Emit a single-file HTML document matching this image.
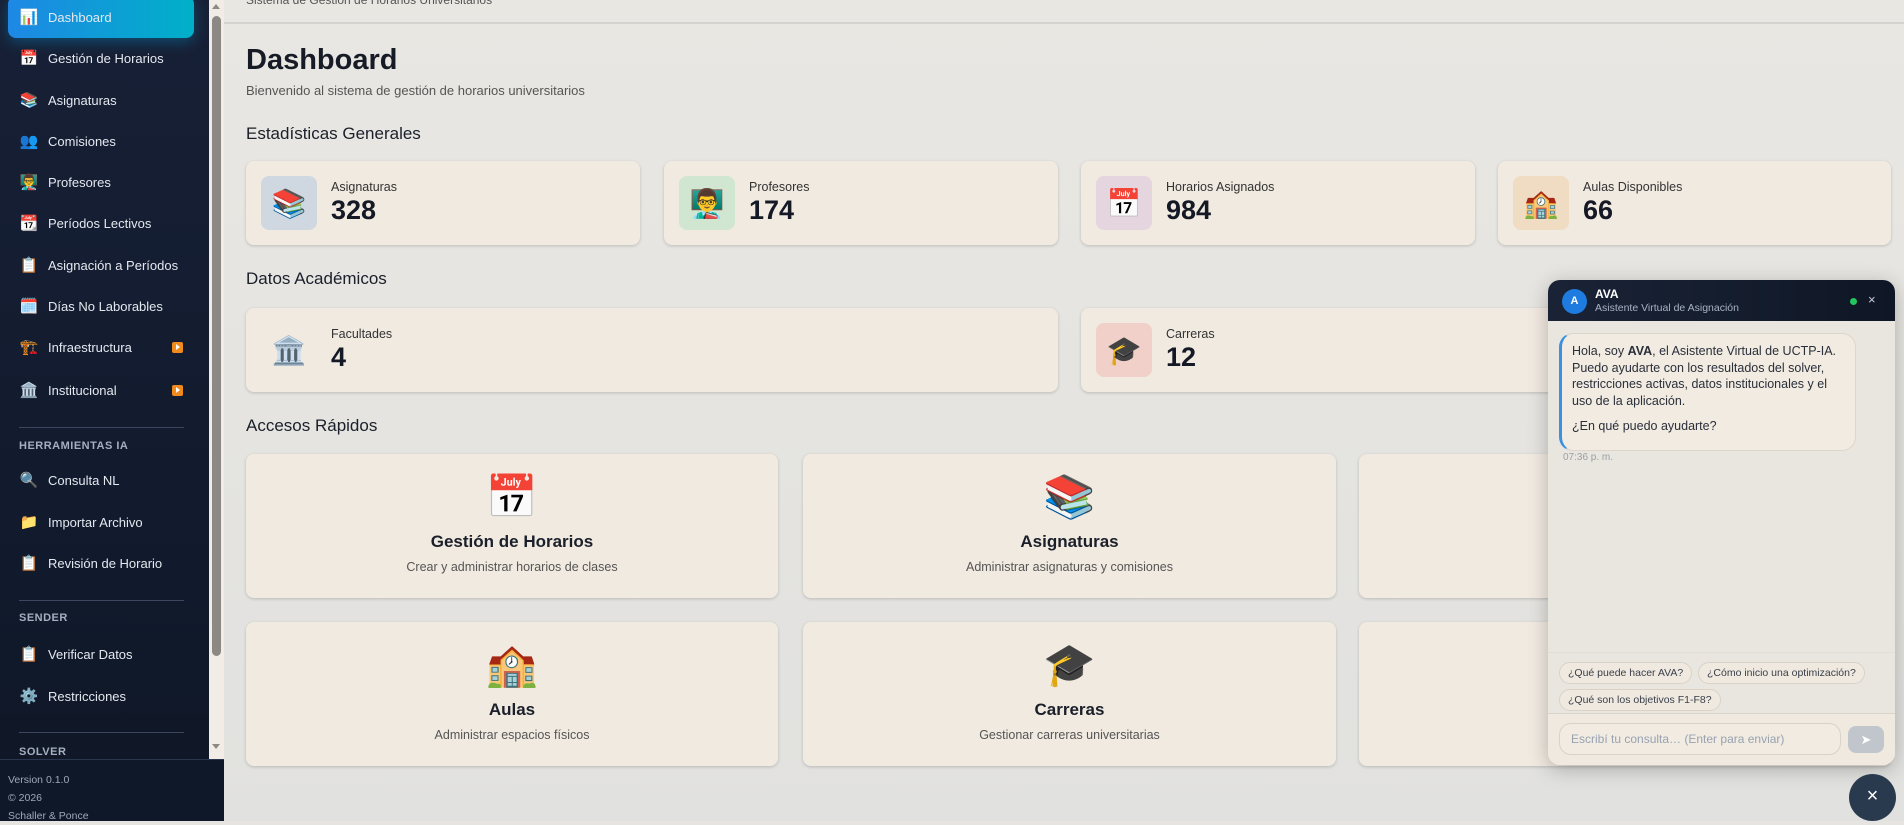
<!DOCTYPE html>
<html><head><meta charset="utf-8">
<style>
*{box-sizing:border-box;margin:0;padding:0}
body{width:1904px;height:821px;overflow:hidden;font-family:"Liberation Sans","DejaVu Sans",sans-serif;background:#e5e4e0;position:relative;color:#1a1f2e}
.sb{position:absolute;left:0;top:0;width:209px;height:821px;background:linear-gradient(180deg,#172036,#111a2c 70%,#0f1726)}
.scr{position:absolute;left:209px;top:0;width:15px;height:759px;background:#f1ede6}
.scr .th{position:absolute;left:3px;top:16px;width:9px;height:640px;background:#8c8884;border-radius:5px}
.scr .up{position:absolute;left:3px;top:4px;border:4px solid transparent;border-bottom:5px solid #8c8884;border-top:0}
.scr .dn{position:absolute;left:3px;top:744px;border:4px solid transparent;border-top:5px solid #8c8884;border-bottom:0}
.it{position:absolute;left:19px;height:30px;display:flex;align-items:center;color:#e4e8ef;font-size:13px}
.it .ic{width:20px;font-size:15px;margin-right:9px;text-align:center}
.act{position:absolute;left:8px;top:-4px;width:186px;height:42px;border-radius:8px;background:linear-gradient(90deg,#1e88e5,#00b0c8);box-shadow:0 4px 14px rgba(0,160,220,.35)}
.arr{position:absolute;left:172px;width:11px;height:11px;background:#f08a1c;border-radius:2px}
.arr:after{content:"";position:absolute;left:4px;top:2px;border-left:4px solid #fff;border-top:3.5px solid transparent;border-bottom:3.5px solid transparent}
.hr{position:absolute;left:19px;width:165px;height:1px;background:#3b4760}
.sec{position:absolute;left:19px;font-size:11px;font-weight:bold;color:#a5afc0;letter-spacing:.5px}
.foot{position:absolute;left:0;top:759px;width:224px;height:62px;background:#0f1828;border-top:1px solid #2a3650;color:#a0a8b8;font-size:10.5px;padding:11px 0 0 8px;line-height:18px}
.main{position:absolute;left:224px;top:0;right:0;height:821px;background:linear-gradient(180deg,#e9e7e2,#e1e1df)}
.top{position:absolute;left:246px;top:0;font-size:12px;color:#555;line-height:1}
.topl{position:absolute;left:224px;right:0;top:22px;height:2px;background:#d5d3cf}
h1{position:absolute;left:246px;top:44px;font-size:29px;font-weight:bold;color:#161b26}
.sub{position:absolute;left:246px;top:83px;font-size:13px;color:#555}
h2{position:absolute;left:246px;font-size:17px;font-weight:normal;color:#1a1f2a}
.card{position:absolute;background:#f1eae1;border-radius:8px;box-shadow:0 1px 3px rgba(0,0,0,.18)}
.ib{position:absolute;left:15px;width:56px;height:54px;border-radius:8px;display:flex;align-items:center;justify-content:center;font-size:28px}
.lbl{position:absolute;left:85px;font-size:12.5px;color:#333}
.val{position:absolute;left:85px;font-size:27px;font-weight:bold;color:#141925}
.q{text-align:center}
.q .e{position:absolute;left:0;right:0;top:18px;font-size:42px;line-height:50px}
.q .t{position:absolute;left:0;right:0;top:78px;font-size:17px;font-weight:bold;color:#1a1f2a}
.q .d{position:absolute;left:0;right:0;top:106px;font-size:12.5px;color:#555}
.chat{position:absolute;left:1548px;top:280px;width:347px;height:485px;border-radius:12px;background:#e9e5df;box-shadow:0 4px 20px rgba(0,0,0,.25);overflow:hidden}
.ch{height:41px;background:linear-gradient(90deg,#1a2336,#0f1726);position:relative}
.av{position:absolute;left:14px;top:9px;width:25px;height:25px;border-radius:50%;background:#1e7be0;color:#fff;font-size:11px;font-weight:bold;text-align:center;line-height:25px}
.msg{position:absolute;left:11px;top:53px;width:297px;height:118px;background:#f1ebe2;border:1px solid #dcd6cd;border-left:3px solid #3d8fe0;border-radius:14px;padding:9px 10px;font-size:12.5px;line-height:16.5px;color:#2a2f3a}
.chip{position:absolute;height:22px;border:1px solid #d8d2c9;border-radius:11px;background:#efe9e0;font-size:10.5px;color:#3a3f4a;line-height:20px;padding:0 8px}
</style></head><body>
<div class="sb">
<div class="act"></div>
<div class="it" style="top:2px"><span class="ic">📊</span>Dashboard</div>
<div class="it" style="top:43px"><span class="ic">📅</span>Gestión de Horarios</div>
<div class="it" style="top:85px"><span class="ic">📚</span>Asignaturas</div>
<div class="it" style="top:126px"><span class="ic">👥</span>Comisiones</div>
<div class="it" style="top:167px"><span class="ic">👨‍🏫</span>Profesores</div>
<div class="it" style="top:208px"><span class="ic">📆</span>Períodos Lectivos</div>
<div class="it" style="top:250px"><span class="ic">📋</span>Asignación a Períodos</div>
<div class="it" style="top:291px"><span class="ic">🗓️</span>Días No Laborables</div>
<div class="it" style="top:332px"><span class="ic">🏗️</span>Infraestructura</div><div class="arr" style="top:342px"></div>
<div class="it" style="top:375px"><span class="ic">🏛️</span>Institucional</div><div class="arr" style="top:385px"></div>
<div class="hr" style="top:427px"></div>
<div class="sec" style="top:440px">HERRAMIENTAS IA</div>
<div class="it" style="top:465px"><span class="ic">🔍</span>Consulta NL</div>
<div class="it" style="top:507px"><span class="ic">📁</span>Importar Archivo</div>
<div class="it" style="top:548px"><span class="ic">📋</span>Revisión de Horario</div>
<div class="hr" style="top:600px"></div>
<div class="sec" style="top:612px">SENDER</div>
<div class="it" style="top:639px"><span class="ic">📋</span>Verificar Datos</div>
<div class="it" style="top:681px"><span class="ic">⚙️</span>Restricciones</div>
<div class="hr" style="top:732px"></div>
<div class="sec" style="top:746px">SOLVER</div>
</div>
<div class="scr"><div class="up"></div><div class="th"></div><div class="dn"></div></div>
<div class="foot">Version 0.1.0<br>© 2026<br>Schaller &amp; Ponce</div>
<div class="main"></div>
<div class="top" style="top:-6px">Sistema de Gestión de Horarios Universitarios</div>
<div class="topl"></div>
<h1>Dashboard</h1>
<div class="sub">Bienvenido al sistema de gestión de horarios universitarios</div>
<h2 style="top:124px">Estadísticas Generales</h2>
<div class="card" style="left:246px;top:161px;width:394px;height:84px"><div class="ib" style="top:15px;background:#cfd8e0">📚</div><div class="lbl" style="top:19px">Asignaturas</div><div class="val" style="top:34px">328</div></div>
<div class="card" style="left:664px;top:161px;width:394px;height:84px"><div class="ib" style="top:15px;background:#d1e6d0">👨‍🏫</div><div class="lbl" style="top:19px">Profesores</div><div class="val" style="top:34px">174</div></div>
<div class="card" style="left:1081px;top:161px;width:394px;height:84px"><div class="ib" style="top:15px;background:#e5d5df">📅</div><div class="lbl" style="top:19px">Horarios Asignados</div><div class="val" style="top:34px">984</div></div>
<div class="card" style="left:1498px;top:161px;width:393px;height:84px"><div class="ib" style="top:15px;background:#f0dcc2">🏫</div><div class="lbl" style="top:19px">Aulas Disponibles</div><div class="val" style="top:34px">66</div></div>
<h2 style="top:269px">Datos Académicos</h2>
<div class="card" style="left:246px;top:308px;width:812px;height:84px"><div class="ib" style="top:15px">🏛️</div><div class="lbl" style="top:19px">Facultades</div><div class="val" style="top:34px">4</div></div>
<div class="card" style="left:1081px;top:308px;width:810px;height:84px"><div class="ib" style="top:15px;background:#f0d0c8">🎓</div><div class="lbl" style="top:19px">Carreras</div><div class="val" style="top:34px">12</div></div>
<h2 style="top:416px">Accesos Rápidos</h2>
<div class="card q" style="left:246px;top:454px;width:532px;height:144px"><div class="e">📅</div><div class="t">Gestión de Horarios</div><div class="d">Crear y administrar horarios de clases</div></div>
<div class="card q" style="left:803px;top:454px;width:533px;height:144px"><div class="e">📚</div><div class="t">Asignaturas</div><div class="d">Administrar asignaturas y comisiones</div></div>
<div class="card q" style="left:1359px;top:454px;width:532px;height:144px"><div class="e">👨‍🏫</div><div class="t">Profesores</div><div class="d">Gestionar profesores</div></div>
<div class="card q" style="left:246px;top:622px;width:532px;height:144px"><div class="e">🏫</div><div class="t">Aulas</div><div class="d">Administrar espacios físicos</div></div>
<div class="card q" style="left:803px;top:622px;width:533px;height:144px"><div class="e">🎓</div><div class="t">Carreras</div><div class="d">Gestionar carreras universitarias</div></div>
<div class="card q" style="left:1359px;top:622px;width:532px;height:144px"></div>
<div class="chat">
<div class="ch"><div class="av">A</div>
<div style="position:absolute;left:47px;top:7px;color:#fff;font-weight:bold;font-size:12px">AVA</div>
<div style="position:absolute;left:47px;top:22px;color:#a9b3c4;font-size:10.5px">Asistente Virtual de Asignación</div>
<div style="position:absolute;left:302px;top:18px;width:7px;height:7px;border-radius:50%;background:#22c55e"></div>
<div style="position:absolute;left:320px;top:12px;color:#ccd;font-size:13px">×</div></div>
<div class="msg">Hola, soy <b>AVA</b>, el Asistente Virtual de UCTP-IA. Puedo ayudarte con los resultados del solver, restricciones activas, datos institucionales y el uso de la aplicación.<div style="margin-top:9px">¿En qué puedo ayudarte?</div></div>
<div style="position:absolute;left:15px;top:172px;font-size:10px;color:#9aa0a8">07:36 p. m.</div>
<div style="position:absolute;left:0;right:0;top:372px;height:0;border-top:1px solid #e2ddd5"></div>
<div class="chip" style="left:11px;top:382px">¿Qué puede hacer AVA?</div>
<div class="chip" style="left:150px;top:382px">¿Cómo inicio una optimización?</div>
<div class="chip" style="left:11px;top:409px">¿Qué son los objetivos F1-F8?</div>
<div style="position:absolute;left:0;right:0;top:433px;bottom:0;border-top:1px solid #d8d3cb;background:#efe9e0"></div>
<div style="position:absolute;left:11px;top:443px;width:282px;height:32px;border:1px solid #d8d2c9;border-radius:12px;background:#f1ebe2;font-size:12px;color:#98a2b0;padding:8px 11px">Escribí tu consulta… (Enter para enviar)</div>
<div style="position:absolute;left:300px;top:446px;width:36px;height:27px;border-radius:8px;background:#c1c6cc;color:#fff;text-align:center;line-height:27px;font-size:13px">➤</div>
</div>
<div style="position:absolute;left:1849px;top:774px;width:47px;height:47px;border-radius:50%;background:#2a3a4e;color:#fff;text-align:center;line-height:45px;font-size:20px">×</div>
</body></html>
